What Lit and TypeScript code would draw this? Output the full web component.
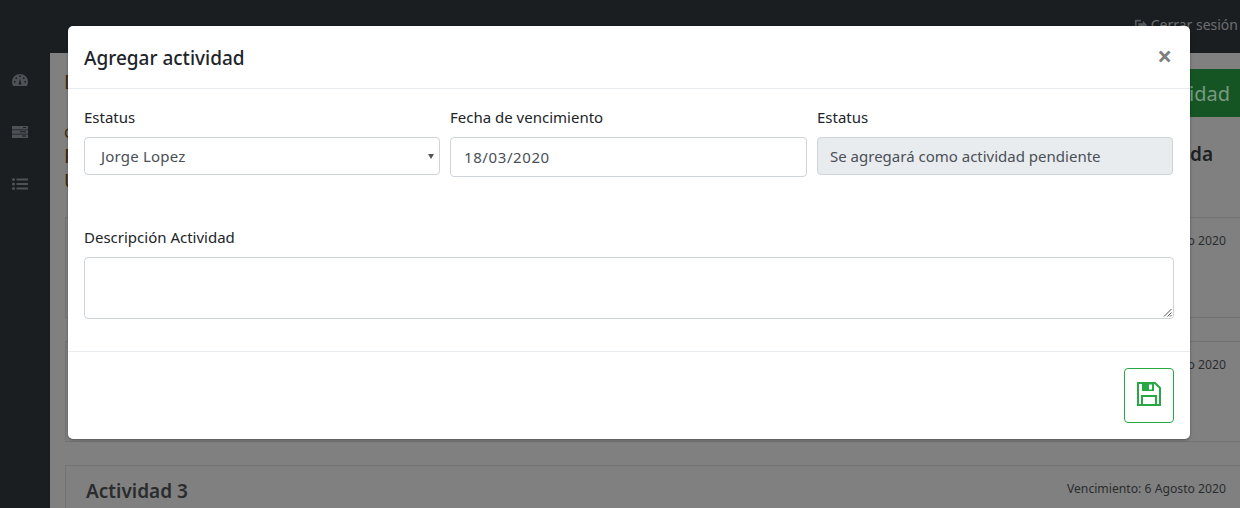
import { LitElement, html, css, svg, unsafeCSS } from "lit";
import { customElement } from "lit/decorators.js";

const FONT = unsafeCSS(`"Noto Sans", "Open Sans", sans-serif`);

const cards = [
  { title: "", date: "5 Agosto 2020" },
  { title: "", date: "5 Agosto 2020" },
  { title: "Actividad 3", date: "6 Agosto 2020" },
];

@customElement("app-root")
export class AppRoot extends LitElement {
  static styles = css`
    :host {
      display: block;
      width: 1240px;
      height: 508px;
      overflow: hidden;
      position: relative;
      font-family: ${FONT};
      background: #fff;
      color: #212529;
    }
    * { box-sizing: border-box; }
    .page { width: 1240px; height: 508px; display: grid; grid-template-rows: 53px 1fr; grid-template-columns: 50px 1fr; background: #808080; overflow: hidden; }
    .top { grid-column: 1 / 3; background: #1b1e21; display: flex; justify-content: flex-end; align-items: flex-start; padding: 15px 2px 0 0; color: #6b6e70; font-size: 14px; line-height: 20px; gap: 3px; }
    .top svg { margin-top: 3px; }
    .side { background: #1b1e21; display: flex; flex-direction: column; align-items: flex-start; gap: 36px; padding: 19px 0 0 12px; color: #4e5256; }
    .side svg { width: 16px; height: 16px; display: block; fill: currentColor; }
    .main { padding: 16px 0 0 16px; position: relative; overflow: hidden; display: flex; flex-direction: column; }
    .head { height: 48px; display: flex; justify-content: space-between; align-items: flex-start; flex: none; }
    .head b { font-size: 20px; line-height: 26px; font-weight: 400; color: #3d2a0c; margin-left: -2px; }
    .add { background: #145523; color: #7a9a81; height: 48px; padding: 0 10px 0 0; font-size: 20px; display: flex; align-items: center; width: 200px; justify-content: flex-end; }
    .info { height: 100px; display: flex; justify-content: space-between; flex: none; }
    .facts { padding-top: 4px; margin-left: -2px; font-size: 15px; line-height: 22px; color: #3d2a0c; }
    .facts .big { font-size: 20px; line-height: 25px; }
    .info h4 { margin: 24px 27px 0 0; font-size: 19px; line-height: 26px; font-weight: 600; color: #1d1f21; }
    .list { display: flex; flex-direction: column; flex: none; margin-left: -1px; }
    .card { border: 1px solid #737373; height: 101px; padding: 12px 15px 0 20px; margin-right: -2px; display: flex; justify-content: space-between; align-items: flex-start; }
    .card + .card { margin-top: 23px; }
    .card h3 { margin: 0; font-size: 19px; line-height: 26px; font-weight: 600; color: #2a2c2e; }
    .card span { font-size: 12.200px; line-height: 20px; color: #2a2c2e; margin-top: 1px; }
    .dialog { position: absolute; left: 68px; top: 26px; width: 1122px; height: 413px; background: #fff; border-radius: 5px; display: flex; flex-direction: column; box-shadow: 0 1px 3px rgba(0,0,0,.35); }
    .mhead { height: 63px; border-bottom: 1px solid #e9ecef; display: flex; justify-content: space-between; align-items: center; padding: 0 18px 0 16px; flex: none; }
    .mhead h2 { margin: 1px 0 0; font-size: 19px; font-weight: 500; color: #212529; }
    .close { font-size: 26px; font-weight: 700; color: #7f7f7f; line-height: 1; margin-top: -3px; }
    .mbody { flex: 1; padding: 18px 16px 0; }
    .row { display: grid; grid-template-columns: 356px 357px 356px; gap: 10px; }
    label { display: block; font-size: 15px; line-height: 20px; margin-bottom: 10px; color: #212529; }
    .ctl { height: 38px; border: 1px solid #ced4da; border-radius: 4px; background: #fff; font-size: 15px; color: #495057; display: flex; align-items: center; padding: 0 13px; position: relative; }
    .sel { padding-left: 16px; letter-spacing: .2px; }
    .caret { position: absolute; right: 5px; top: 16px; width: 0; height: 0; border-left: 3px solid transparent; border-right: 3px solid transparent; border-top: 5px solid #555; }
    .ro { background: #e9ecef; padding-left: 12px; }
    .date { height: 40px; letter-spacing: .6px; }
    .desc { margin-top: 50px; }
    .ta { height: 62px; border: 1px solid #ced4da; border-radius: 4px; position: relative; }
    .grip { position: absolute; right: 1px; bottom: 1px; width: 9px; height: 9px; }
    .mfoot { height: 88px; border-top: 1px solid #e9ecef; display: flex; justify-content: flex-end; padding: 16px; flex: none; }
    .save { width: 50px; height: 55px; border: 1px solid #28a745; border-radius: 4px; background: #fff; display: flex; align-items: center; justify-content: center; padding: 0 0 4px; }
    .save svg { width: 24px; height: 24px; display: block; }
  `;

  render() {
    return html`
      <div class="page">
        <div class="top">
          <svg width="14" height="14" viewBox="0 0 16 16" fill="#54585b"><path d="M2 2h6v2H3v8h5v2H2a1 1 0 0 1-1-1V3a1 1 0 0 1 1-1zm8 1 5 5-5 5v-3H5V6h5z"/></svg>
          <span>Cerrar sesión</span>
        </div>
        <div class="side">
          <svg viewBox="0 0 16 16"><path fill-rule="evenodd" d="M8 2a8 8 0 0 0-8 8c0 1.500.4 2.800 1.100 4h13.800A8 8 0 0 0 16 10a8 8 0 0 0-8-8zM7.200 3.500h1.600v1.600H7.200zM3.500 5.500h1.600v1.600H3.500zm7.400 0h1.600v1.600h-1.600zM2 9h1.600v1.600H2zm10.400 0H14v1.600h-1.600zM6.600 12.500 8 6.500l1.400 6z"/></svg>
          <svg viewBox="0 0 16 16"><path fill-rule="evenodd" d="M0 2h16v3.500H0zm11 1v1h3V3zM0 6.300h16v3.500H0zm8 1v1h6v-1zM0 10.600h16V14H0zm10 1v1h4v-1z"/></svg>
          <svg viewBox="0 0 16 16"><circle cx="1.500" cy="3.500" r="1.500"/><circle cx="1.500" cy="8" r="1.500"/><circle cx="1.500" cy="12.500" r="1.500"/><path d="M4.500 2.500H16v2H4.500zM4.500 7H16v2H4.500zM4.500 11.500H16v2H4.500z"/></svg>
        </div>
        <div class="main">
          <div class="head"><b>Detalle</b><div class="add">Agregar actividad</div></div>
          <div class="info">
            <div class="facts"><div>Cliente</div><div class="big">Proyecto</div><div class="big">Usuario</div></div>
            <h4>Pendientes y Completada</h4>
          </div>
          <div class="list">
            ${cards.map(c => html`<div class="card"><h3>${c.title}</h3><span>Vencimiento: ${c.date}</span></div>`)}
          </div>
        </div>
      </div>
      <div class="dialog">
        <div class="mhead"><h2>Agregar actividad</h2><span class="close">×</span></div>
        <div class="mbody">
          <div class="row">
            <div><label>Estatus</label><div class="ctl sel">Jorge Lopez<i class="caret"></i></div></div>
            <div><label>Fecha de vencimiento</label><div class="ctl date">18/03/2020</div></div>
            <div><label>Estatus</label><div class="ctl ro">Se agregará como actividad pendiente</div></div>
          </div>
          <div class="desc">
            <label>Descripción Actividad</label>
            <div class="ta"><svg class="grip" viewBox="0 0 9 9">${svg`<path d="M8.500 1 1 8.500M8.500 4.500 4.500 8.500M8.500 7 7 8.500" stroke="#555" stroke-width="1" fill="none"/>`}</svg></div>
          </div>
        </div>
        <div class="mfoot">
          <button class="save" aria-label="Guardar">
            <svg viewBox="0 0 24 24"><path fill="none" stroke="#28a745" stroke-width="2" d="M1 1h17l5 5v17H1z"/><path fill="#28a745" fill-rule="evenodd" d="M5 1h12v8H5zM12 2.500v5h3v-5z"/><path fill="none" stroke="#28a745" stroke-width="2" d="M5 23v-9h14v9"/></svg>
          </button>
        </div>
      </div>
    `;
  }
}
